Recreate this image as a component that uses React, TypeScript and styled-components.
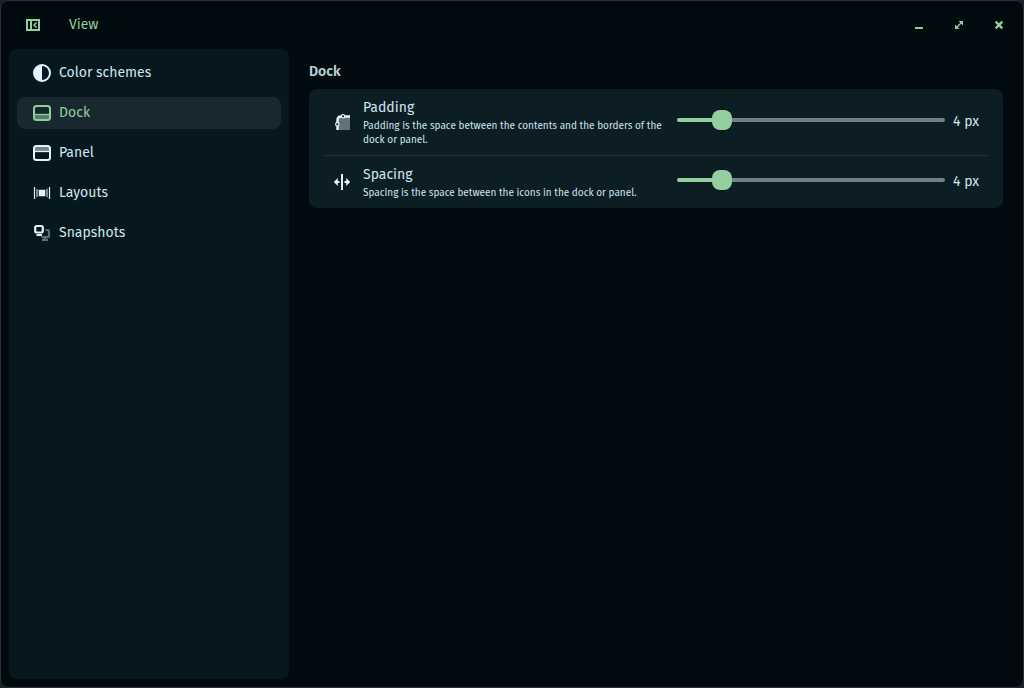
import React, { useState } from "react";
import styled, { createGlobalStyle, css } from "styled-components";

const color = {
  desktop: "#1e1f20",
  window: "#000a0f",
  border: "#26343a",
  sidebar: "#06171d",
  selected: "#18282e",
  card: "#0c1d23",
  divider: "#26363c",
  accent: "#92cf9c",
  text: "#cfe6f1",
  heading: "#b9d0da",
  icon: "#e1f3fe",
  track: "#6f8287",
};

const GlobalStyle = createGlobalStyle`
  *, *::before, *::after { box-sizing: border-box; }
  body {
    margin: 0;
    background: ${color.desktop};
    color: ${color.text};
    font: 14px/20px "Fira Sans", "Noto Sans", sans-serif;
  }
  button, input { font: inherit; }
`;

const Window = styled.div`
  display: flex;
  flex-direction: column;
  min-height: 100vh;
  padding: 0 8px 8px;
  border: 1px solid ${color.border};
  border-radius: 8px;
  background: ${color.window};
`;

const HeaderBar = styled.header`
  display: flex;
  align-items: center;
  gap: 12px;
  height: 48px;
  color: ${color.accent};
`;

const IconButton = styled.button<{ $wide?: boolean }>`
  display: flex;
  align-items: center;
  justify-content: center;
  width: ${(p) => (p.$wide ? 48 : 32)}px;
  height: 32px;
  padding: 0;
  border: 0;
  border-radius: 8px;
  background: none;
  color: inherit;
  cursor: pointer;
`;

const MenuButton = styled.button`
  padding: 0;
  border: 0;
  background: none;
  color: inherit;
  cursor: pointer;
`;

const WindowControls = styled.div`
  display: flex;
  gap: 8px;
  margin-left: auto;
`;

const Body = styled.div`
  display: flex;
  flex: 1;
`;

const Sidebar = styled.nav`
  display: flex;
  flex: none;
  flex-direction: column;
  gap: 8px;
  width: 280px;
  padding: 8px;
  border-radius: 8px;
  background: ${color.sidebar};
`;

const NavLink = styled.a<{ $active: boolean }>`
  display: flex;
  align-items: center;
  gap: 8px;
  height: 32px;
  padding: 0 16px;
  border-radius: 8px;
  color: ${color.text};
  text-decoration: none;
  svg { color: ${color.icon}; }
  ${(p) =>
    p.$active &&
    css`
      background: ${color.selected};
      &, svg { color: ${color.accent}; }
    `}
`;

const Content = styled.main`
  flex: 1;
  min-width: 0;
  padding: 12px 12px 12px 20px;
`;

const SectionTitle = styled.h1`
  margin: 0 0 6px;
  color: ${color.heading};
  font-size: 14px;
  font-weight: 600;
  line-height: 22px;
`;

const Card = styled.section`
  padding: 0 16px;
  border-radius: 8px;
  background: ${color.card};
`;

const SettingRow = styled.div`
  display: flex;
  align-items: center;
  padding: 8px;
  & + & { border-top: 1px solid ${color.divider}; }
  > svg { flex: none; color: ${color.icon}; }
`;

const SettingText = styled.div`
  flex: 1;
  min-width: 0;
  margin: 0 12px;
`;

const SettingLabel = styled.label`
  display: block;
  line-height: 22px;
`;

const Description = styled.p`
  margin: 0;
  font-size: 10px;
  line-height: 14px;
`;

const Slider = styled.input<{ $fill: number }>`
  appearance: none;
  flex: 0 1 268px;
  min-width: 80px;
  height: 20px;
  margin: 0 8px 4px 0;
  background: none;
  cursor: pointer;
  &::-webkit-slider-runnable-track {
    height: 4px;
    border-radius: 2px;
    background: linear-gradient(to right, ${color.accent} ${(p) => p.$fill}%, ${color.track} ${(p) => p.$fill}%);
  }
  &::-webkit-slider-thumb {
    appearance: none;
    width: 20px;
    height: 20px;
    margin-top: -8px;
    border-radius: 8px;
    background: ${color.accent};
  }
`;

const Value = styled.output`
  width: 26px;
  white-space: nowrap;
`;

const Icon = ({ children, size = 18 }: { children: React.ReactNode; size?: number }) => (
  <svg width={size} height={size} viewBox={`0 0 ${size} ${size}`} fill="none" stroke="currentColor" strokeWidth="2" aria-hidden="true">
    {children}
  </svg>
);

const SidebarIcon = () => (
  <Icon size={16}>
    <path d="M2 3h12v10H2zM6 3v10" />
    <path d="M11.500 5.500 9 8l2.500 2.500" strokeWidth="1.6" />
  </Icon>
);
const MinimizeIcon = () => (
  <Icon size={16}>
    <path d="M4 11h8" />
  </Icon>
);
const MaximizeIcon = () => (
  <Icon size={16}>
    <path d="M7.500 4H12v4.500zM4 7.500V12h4.500z" fill="currentColor" stroke="none" />
    <path d="m5 11 6-6" strokeWidth="1.5" />
  </Icon>
);
const CloseIcon = () => (
  <Icon size={16}>
    <path d="m4.700 4.700 6.600 6.600M11.300 4.700l-6.600 6.600" strokeWidth="2.4" />
  </Icon>
);
const SchemesIcon = () => (
  <Icon>
    <circle cx="9" cy="9" r="8" />
    <path d="M9 1a8 8 0 0 0 0 16z" fill="currentColor" stroke="none" />
  </Icon>
);
const DockIcon = () => (
  <Icon>
    <path d="M2 11h14v4H2z" fill="currentColor" fillOpacity=".5" stroke="none" />
    <rect x="1" y="2" width="16" height="14" rx="2.500" />
    <path d="M2 10.500h14" strokeWidth="1.300" />
  </Icon>
);
const PanelIcon = () => (
  <Icon>
    <path d="M2 3h14v4H2z" fill="currentColor" fillOpacity=".5" stroke="none" />
    <rect x="1" y="2" width="16" height="14" rx="2.500" />
    <path d="M2 7.500h14" strokeWidth="1.300" />
  </Icon>
);
const LayoutsIcon = () => (
  <Icon>
    <rect x="5.700" y="5.700" width="6.600" height="6.600" rx=".5" fill="currentColor" stroke="none" />
    <path d="M3 4.500l2 .7v7.600l-2 .7zM15 4.500l-2 .7v7.600l2 .7z" fill="currentColor" fillOpacity=".5" stroke="none" />
    <path d="M1.500 3v12M16.500 3v12" strokeWidth="1.200" />
  </Icon>
);
const SnapshotsIcon = () => (
  <Icon>
    <path d="M12.500 6H14.500q1.500 0 1.500 1.500v4q0 1.500-1.500 1.500H8.500M12 13v3M9 15.800h6" strokeOpacity=".4" strokeWidth="2.200" />
    <rect x="2.200" y="2" width="7.600" height="6.500" rx="1.500" strokeWidth="2.200" />
    <path d="M3.500 11h5.500" />
  </Icon>
);
const PaddingIcon = () => (
  <Icon>
    <path d="M5 4h12v13H5z" fill="currentColor" fillOpacity=".4" stroke="none" />
    <path d="M4.500 17V7Q4.500 3.500 8 3.500H17" strokeWidth="2.400" />
    <circle cx="10" cy="3.300" r="1.700" fill={color.card} strokeWidth="1.200" />
    <circle cx="4.300" cy="11.300" r="1.700" fill={color.card} strokeWidth="1.200" />
  </Icon>
);
const SpacingIcon = () => (
  <Icon>
    <path d="M9 1v16M3 9h3.500M11.500 9h3.500" />
    <path d="M.8 9 4.800 5v8zM17.200 9l-4-4v8z" fill="currentColor" stroke="none" />
  </Icon>
);

const pages = [
  { name: "Color schemes", icon: <SchemesIcon /> },
  { name: "Dock", icon: <DockIcon /> },
  { name: "Panel", icon: <PanelIcon /> },
  { name: "Layouts", icon: <LayoutsIcon /> },
  { name: "Snapshots", icon: <SnapshotsIcon /> },
];

const MAX = 28;

function Setting({ id, label, description, icon }: { id: string; label: string; description: string; icon: React.ReactNode }) {
  const [value, setValue] = useState(4);
  return (
    <SettingRow>
      {icon}
      <SettingText>
        <SettingLabel htmlFor={id}>{label}</SettingLabel>
        <Description>{description}</Description>
      </SettingText>
      <Slider
        id={id}
        type="range"
        min={0}
        max={MAX}
        value={value}
        $fill={(value / MAX) * 100}
        onChange={(e) => setValue(Number(e.target.value))}
      />
      <Value htmlFor={id}>{value} px</Value>
    </SettingRow>
  );
}

export default function App() {
  return (
    <>
      <GlobalStyle />
      <Window>
        <HeaderBar>
          <IconButton $wide aria-label="Toggle sidebar"><SidebarIcon /></IconButton>
          <MenuButton>View</MenuButton>
          <WindowControls>
            <IconButton aria-label="Minimize"><MinimizeIcon /></IconButton>
            <IconButton aria-label="Maximize"><MaximizeIcon /></IconButton>
            <IconButton aria-label="Close"><CloseIcon /></IconButton>
          </WindowControls>
        </HeaderBar>
        <Body>
          <Sidebar>
            {pages.map((page) => (
              <NavLink key={page.name} href="#" $active={page.name === "Dock"}>
                {page.icon}
                {page.name}
              </NavLink>
            ))}
          </Sidebar>
          <Content>
            <SectionTitle>Dock</SectionTitle>
            <Card>
              <Setting
                id="padding"
                label="Padding"
                description="Padding is the space between the contents and the borders of the dock or panel."
                icon={<PaddingIcon />}
              />
              <Setting
                id="spacing"
                label="Spacing"
                description="Spacing is the space between the icons in the dock or panel."
                icon={<SpacingIcon />}
              />
            </Card>
          </Content>
        </Body>
      </Window>
    </>
  );
}
